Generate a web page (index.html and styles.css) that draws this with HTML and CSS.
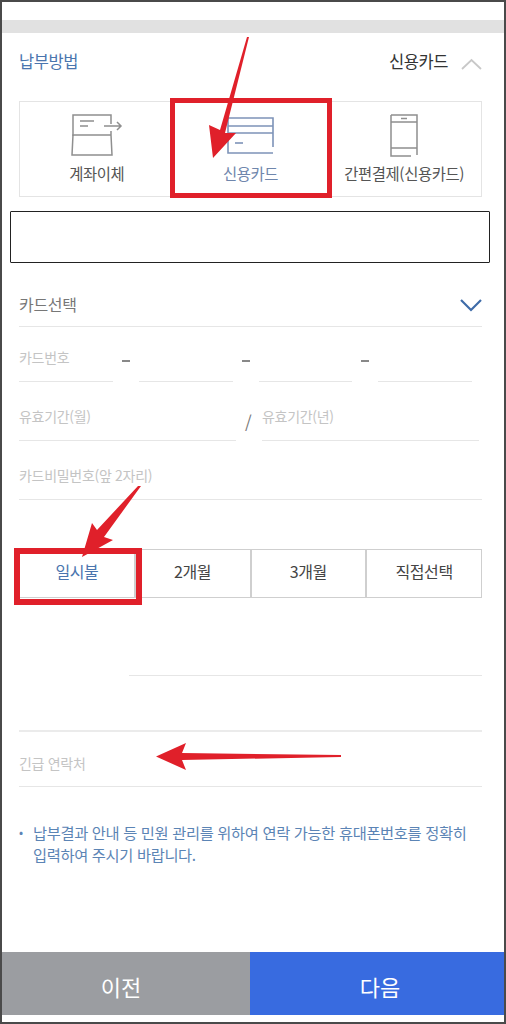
FILE: index.html
```html
<!DOCTYPE html>
<html lang="ko">
<head>
    <meta charset="UTF-8">
    <meta name="viewport" content="width=device-width, initial-scale=1.0">
    <title>납부방법</title>
    <link rel="stylesheet" href="styles.css">
</head>
<body>
    <div class="frame">
        <div class="top-band"></div>

        <!-- 납부방법 헤더 -->
        <div class="method-head">
            <span class="method-title">납부방법</span>
            <span class="method-value">신용카드</span>
            <svg class="chevron" width="21" height="12" viewBox="0 0 21 12"><path d="M1 11 L10.5 2 L20 11" fill="none" stroke="#c8c8c8" stroke-width="1.8"/></svg>
        </div>

        <!-- 결제수단 탭 -->
        <div class="tabs">
            <div class="tab">
                <svg width="52" height="44" viewBox="0 0 52 44" fill="none" stroke="#8f8f8f" stroke-width="1.5">
                    <path d="M2 22 V1 H40 V10"/>
                    <path d="M40 17 V21 H2 L1 41 H41 L40 21"/>
                    <path d="M9 7 H23 M9 12 H17"/>
                    <path d="M33 12 H50 M46 8 L50 12 L46 16"/>
                </svg>
                <span class="tab-label">계좌이체</span>
            </div>
            <div class="tab tab-active">
                <svg width="48" height="38" viewBox="0 0 48 38" fill="none" stroke="#7d93b8" stroke-width="1.6">
                    <path d="M1 1 H46 V30 M46 36 H1 V1"/>
                    <path d="M1 9 H46 M1 16 H46" />
                    <path d="M8 26 H16"/>
                </svg>
                <span class="tab-label">신용카드</span>
            </div>
            <div class="tab">
                <svg width="30" height="44" viewBox="0 0 30 44" fill="none" stroke="#8f8f8f" stroke-width="1.5">
                    <path d="M2 1 H28 V41 M22 42 H2 V1"/>
                    <path d="M2 8 H28 M2 34 H28"/>
                    <path d="M12 4.5 H18"/>
                </svg>
                <span class="tab-label">간편결제(신용카드)</span>
            </div>
        </div>

        <div class="blank-box"></div>

        <!-- 카드 입력 -->
        <div class="card-select">
            <span>카드선택</span>
            <svg width="22" height="13" viewBox="0 0 22 13"><path d="M1 1 L11 11 L21 1" fill="none" stroke="#3f6ca8" stroke-width="2.2"/></svg>
        </div>

        <div class="card-number">
            <div class="field">카드번호</div>
            <span class="dash"></span>
            <div class="field"></div>
            <span class="dash"></span>
            <div class="field"></div>
            <span class="dash"></span>
            <div class="field"></div>
        </div>

        <div class="expiry">
            <div class="field">유효기간(월)</div>
            <span class="slash">/</span>
            <div class="field">유효기간(년)</div>
        </div>

        <div class="field password">카드비밀번호(앞 2자리)</div>

        <!-- 할부 선택 -->
        <div class="plans">
            <div class="plan plan-active">일시불</div>
            <div class="plan">2개월</div>
            <div class="plan">3개월</div>
            <div class="plan">직접선택</div>
        </div>

        <div class="line-short"></div>
        <div class="line-full"></div>

        <div class="field phone">긴급 연락처</div>

        <div class="note">
            <span class="note-dot">•</span>
            <p>납부결과 안내 등 민원 관리를 위하여 연락 가능한 휴대폰번호를 정확히 입력하여 주시기 바랍니다.</p>
        </div>

        <div class="bottom-btns">
            <div class="btn btn-prev">이전</div>
            <div class="btn btn-next">다음</div>
        </div>
    </div>

    <!-- 빨간 표시 -->
    <div class="mark mark-tab"></div>
    <div class="mark mark-plan"></div>
    <svg class="arrows" width="506" height="1024" viewBox="0 0 506 1024">
        <path d="M249 37 L247 37 L220 130 L209 125 L213 158 L236 133 L225 133 Z" fill="#e0202a"/>
        <path d="M141 486 L138 486 L97 530 L92 523 L82 557 L113 540 L104 537 Z" fill="#e0202a"/>
        <path d="M341 755 L182 753 L186 743 L156 756.5 L186 770 L182 760 L341 757 Z" fill="#e0202a"/>
    </svg>
</body>
</html>
```

FILE: styles.css
```css
/* 기본 */
* {
    box-sizing: border-box;
}

body {
    margin: 0;
    width: 506px;
    height: 1024px;
    overflow: hidden;
    position: relative;
    background-color: #fff;
    font-family: "Noto Sans CJK KR", "Noto Sans", sans-serif;
    color: #444;
}

.frame {
    width: 506px;
    height: 1024px;
    margin: 0;
    padding-top: 18px;
    border: 2px solid #4a4a4a;
    display: flex;
    flex-direction: column;
}

.top-band {
    height: 13px;
    background-color: #e1e1e1;
}

/* 헤더 */
.method-head {
    height: 68px;
    padding: 0 22px 12px 17px;
    display: flex;
    align-items: center;
}

.method-title {
    font-size: 16.5px;
    letter-spacing: -0.4px;
    color: #4a75ae;
    margin-right: auto;
}

.method-value {
    font-size: 16.5px;
    letter-spacing: -0.4px;
    color: #333;
    margin-right: 13px;
}

.chevron {
    margin-top: 6px;
}

/* 탭 */
.tabs {
    height: 96px;
    margin: 0 22px 0 17px;
    border: 1px solid #e4e4e4;
    display: flex;
}

.tab {
    flex: 1;
    padding-top: 12px;
    display: flex;
    flex-direction: column;
    align-items: center;
}

.tab svg {
    height: 44px;
}

.tab-label {
    margin-top: 4px;
    font-size: 15.4px;
    line-height: 22px;
    letter-spacing: -0.4px;
    color: #555;
    white-space: nowrap;
}

.tab-active .tab-label {
    color: #6f86ac;
}

.blank-box {
    height: 52px;
    margin: 14px 14px 0 8px;
    border: 1.5px solid #222;
    border-radius: 1px;
}

/* 입력 */
.card-select {
    height: 64px;
    margin: 0 22px 0 17px;
    padding: 18px 0 0;
    border-bottom: 1px solid #e6e6e6;
    display: flex;
    align-items: center;
    justify-content: space-between;
    font-size: 16px;
    letter-spacing: -0.3px;
    color: #777;
}

.card-select svg {
    margin-top: 4px;
}

.field {
    border-bottom: 1px solid #e6e6e6;
    font-size: 14px;
    letter-spacing: -0.3px;
    color: #c4c4c4;
}

.card-number {
    height: 55px;
    margin: 0 32px 0 17px;
    display: flex;
}

.card-number .field {
    width: 94px;
    height: 100%;
    padding-top: 20px;
    white-space: nowrap;
}

.dash {
    width: 8px;
    height: 2px;
    margin: 33px 9px 0;
    background-color: #888;
}

.expiry {
    height: 59px;
    margin: 0 25px 0 17px;
    display: flex;
}

.expiry .field {
    flex: 1;
    padding-top: 24px;
}

.slash {
    width: 26px;
    padding: 27px 0 0 9px;
    font-size: 17px;
    color: #777;
}

.password {
    height: 59px;
    margin: 0 22px 0 17px;
    padding-top: 24px;
}

/* 할부 */
.plans {
    height: 49px;
    margin: 49px 22px 0 17px;
    display: flex;
    border: 1px solid #cfcfcf;
}

.plan {
    flex: 1;
    display: flex;
    align-items: center;
    justify-content: center;
    border-left: 2px solid #cfcfcf;
    font-size: 16px;
    letter-spacing: -0.4px;
    color: #444;
    padding-bottom: 5px;
}

.plan-active {
    border-left: none;
    color: #4a75ae;
}

.line-short {
    height: 1px;
    margin: 77px 22px 0 127px;
    background-color: #e6e6e6;
}

.line-full {
    height: 2px;
    margin: 54px 22px 0 17px;
    background-color: #ebebeb;
}

.phone {
    height: 55px;
    margin: 0 22px 0 17px;
    padding-top: 21px;
}

/* 안내문 */
.note {
    margin: 34px 22px 0 17px;
    display: flex;
    font-size: 15.3px;
    line-height: 22px;
    letter-spacing: -0.35px;
    color: #5b84b5;
}

.note-dot {
    width: 14px;
    flex: none;
    font-size: 12px;
}

.note p {
    margin: 0;
}

/* 하단 버튼 */
.bottom-btns {
    height: 63px;
    margin-top: auto;
    margin-bottom: 7px;
    display: flex;
}

.btn {
    display: flex;
    align-items: center;
    justify-content: center;
    font-size: 22px;
    color: #fff;
    padding-top: 5px;
}

.btn-prev {
    width: 248px;
    padding-right: 10px;
    background-color: #9b9da1;
}

.btn-next {
    flex: 1;
    padding-left: 6px;
    background-color: #386be0;
}

/* 빨간 표시 (위에 겹침) */
.mark {
    position: absolute;
    border: 5px solid #e0202a;
}

.mark-tab {
    left: 170px;
    top: 98px;
    width: 162px;
    height: 100px;
}

.mark-plan {
    left: 14px;
    top: 548px;
    width: 128px;
    height: 57px;
    border-width: 6px;
}

.arrows {
    position: absolute;
    left: 0;
    top: 0;
}
```
